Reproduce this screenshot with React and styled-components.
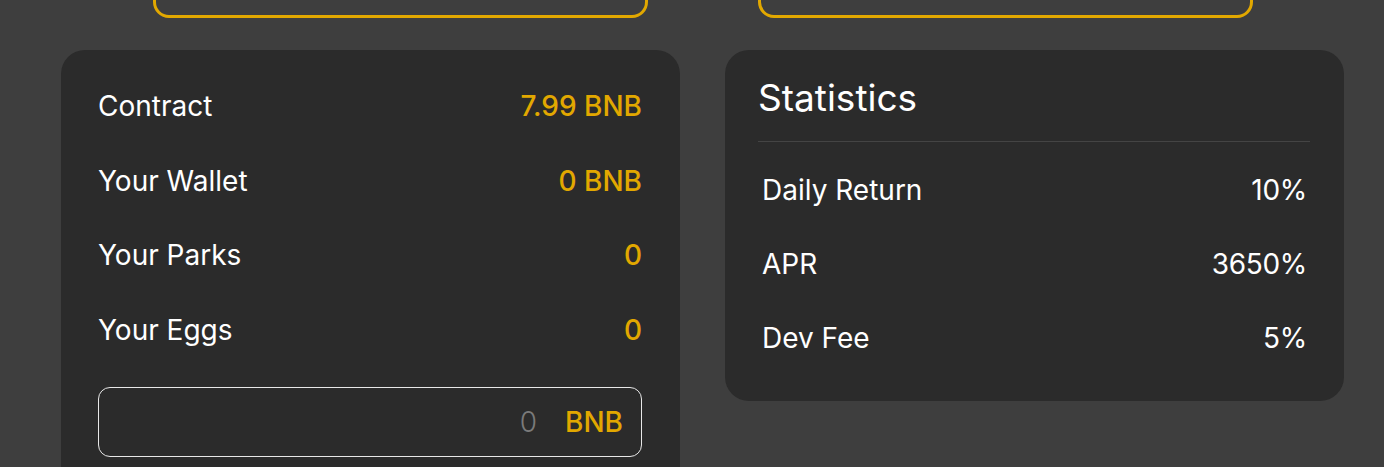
import styled, { createGlobalStyle } from "styled-components";

const GlobalStyle = createGlobalStyle`
  html, body {
    margin: 0;
    background: #3e3e3e;
    font-family: Inter, "Noto Sans", sans-serif;
    color: #fff;
    overflow: hidden;
  }
`;

const Page = styled.div`
  width: 1384px;
  height: 467px;
  overflow: hidden;
`;

const Grid = styled.div`
  display: grid;
  grid-template-columns: 619px 619px;
  column-gap: 45px;
  padding-left: 61px;
`;

const TopBox = styled.div`
  height: 80px;
  width: 495px;
  margin-top: -62px;
  margin-left: ${(p) => p.$offset}px;
  box-sizing: border-box;
  border: 3px solid #e2a800;
  border-radius: 16px;
  margin-bottom: 32px;
`;

const Card = styled.div`
  background: #2b2b2b;
  border-radius: 24px;
  box-sizing: border-box;
  padding: ${(p) => p.$pad};
  height: ${(p) => p.$height}px;
`;

const Row = styled.div`
  display: flex;
  justify-content: space-between;
  align-items: center;
  height: ${(p) => p.$h || 74.5}px;
  font-size: 28px;
  padding: 0 ${(p) => p.$right || 0}px 0 ${(p) => p.$left || 0}px;
`;

const Label = styled.span`
  font-weight: 400;
`;

const Value = styled.span`
  font-weight: ${(p) => (p.$gold ? 500 : 400)};
  color: ${(p) => (p.$gold ? "#e2a800" : "#fff")};
  letter-spacing: ${(p) => (p.$gold ? 0 : -0.3)}px;
`;

const InputBox = styled.div`
  margin-top: 20px;
  height: 70px;
  box-sizing: border-box;
  border: 1px solid #e8e8e8;
  border-radius: 12px;
  display: flex;
  align-items: center;
  justify-content: flex-end;
  padding-right: 18px;
  gap: 28px;
  font-size: 28px;
`;

const Placeholder = styled.span`
  color: #7a7a7a;
  font-weight: 300;
`;

const Unit = styled.span`
  color: #e2a800;
  font-weight: 500;
`;

const Title = styled.h2`
  margin: 0;
  font-size: 37px;
  font-weight: 400;
  padding-bottom: 21px;
  border-bottom: 1px solid #444;
  margin-bottom: 11px;
`;

const wallet = [
  ["Contract", "7.99 BNB"],
  ["Your Wallet", "0 BNB"],
  ["Your Parks", "0"],
  ["Your Eggs", "0"],
];

const stats = [
  ["Daily Return", "10%"],
  ["APR", "3650%"],
  ["Dev Fee", "5%"],
];

export default function App() {
  return (
    <Page>
      <GlobalStyle />
      <Grid>
        <TopBox $offset={92} />
        <TopBox $offset={33} />
        <Card $pad="19px 38px 0 37px" $height={480}>
          {wallet.map(([l, v]) => (
            <Row key={l}>
              <Label>{l}</Label>
              <Value $gold>{v}</Value>
            </Row>
          ))}
          <InputBox>
            <Placeholder>0</Placeholder>
            <Unit>BNB</Unit>
          </InputBox>
        </Card>
        <Card $pad="25px 34px 0 33px" $height={351}>
          <Title>Statistics</Title>
          {stats.map(([l, v]) => (
            <Row key={l} $left={4} $right={3} $h={74}>
              <Label>{l}</Label>
              <Value>{v}</Value>
            </Row>
          ))}
        </Card>
      </Grid>
    </Page>
  );
}
